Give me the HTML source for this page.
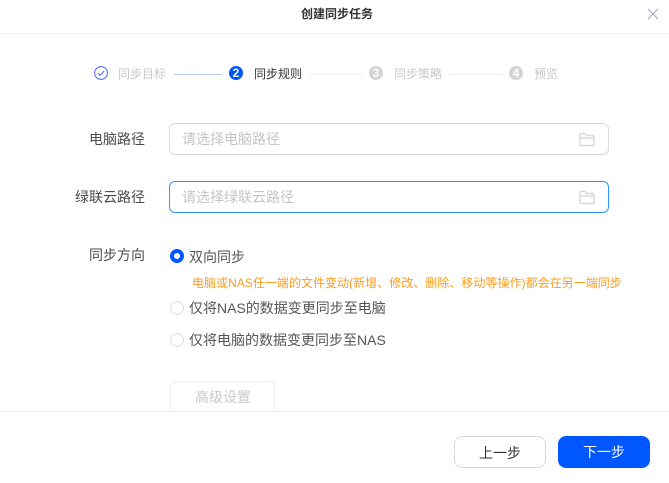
<!DOCTYPE html>
<html lang="zh">
<head>
<meta charset="utf-8">
<style>
html,body{margin:0;padding:0;background:#fff;}
body{width:669px;height:483px;position:relative;overflow:hidden;font-family:"Liberation Sans","Noto Sans CJK SC",sans-serif;}
.a{position:absolute;white-space:nowrap;}
.s{font-size:12px;line-height:16px;top:66px;}
.l{height:1px;top:74px;background:#ececec;}
.n{top:66px;width:14px;height:14px;border-radius:50%;background:#d4d4d4;color:#fff;font-size:12px;font-weight:bold;line-height:14px;text-align:center;}
.lab{font-size:14px;line-height:20px;color:#4a4a4a;right:524px;}
.inp{left:169px;width:438px;height:30px;border:1px solid #d9d9d9;border-radius:6px;}
.ph{font-size:14px;line-height:20px;color:#c4c4c4;left:182px;}
.r{left:170px;width:12px;height:12px;border:1px solid #dcdcdc;border-radius:50%;}
.t{left:189px;font-size:14px;line-height:20px;color:#555;}
.btn{top:436px;width:90px;height:30px;border-radius:8px;font-size:14px;line-height:32px;text-align:center;}
</style>
</head>
<body>
<div class="a" style="left:0;width:674px;top:6px;text-align:center;font-size:12px;font-weight:bold;line-height:16px;color:#333;">创建同步任务</div>
<svg class="a" style="left:646px;top:7px" width="14" height="14" viewBox="0 0 14 14"><path d="M2 2L12 12M12 2L2 12" stroke="#a3a6b4" stroke-width="1" fill="none"/></svg>
<div class="a" style="left:0;top:33px;width:669px;height:1px;background:#ececec;"></div>

<svg class="a" style="left:94px;top:66px" width="14" height="14" viewBox="0 0 14 14"><circle cx="7" cy="7" r="6.4" fill="none" stroke="#4b62f5" stroke-width="1"/><path d="M3.9 7.2L6.2 9.4L10.2 4.9" fill="none" stroke="#4b62f5" stroke-width="1"/></svg>
<div class="a s" style="left:118px;color:#c8c8c8;">同步目标</div>
<div class="a l" style="left:174px;width:48px;background:#b9cff2;"></div>
<div class="a n" style="left:229px;background:#0057ff;">2</div>
<div class="a s" style="left:254px;color:#333;">同步规则</div>
<div class="a l" style="left:310px;width:52px;"></div>
<div class="a n" style="left:369px;">3</div>
<div class="a s" style="left:394px;color:#c8c8c8;">同步策略</div>
<div class="a l" style="left:450px;width:52px;"></div>
<div class="a n" style="left:509px;">4</div>
<div class="a s" style="left:534px;color:#c8c8c8;">预览</div>

<div class="a lab" style="top:129px;">电脑路径</div>
<div class="a inp" style="top:123px;"></div>
<div class="a ph" style="top:129px;">请选择电脑路径</div>
<svg class="a" style="left:579px;top:132px" width="16" height="15" viewBox="0 0 16 15"><path d="M1 2.5a1 1 0 0 1 1-1h4l1.5 2H14a1 1 0 0 1 1 1v8a1 1 0 0 1-1 1H2a1 1 0 0 1-1-1zM1 6H15" fill="none" stroke="#d8d8d8" stroke-width="1.4"/></svg>

<div class="a lab" style="top:187px;">绿联云路径</div>
<div class="a inp" style="top:181px;border-color:#2f95ff;"></div>
<div class="a ph" style="top:187px;">请选择绿联云路径</div>
<svg class="a" style="left:579px;top:190px" width="16" height="15" viewBox="0 0 16 15"><path d="M1 2.5a1 1 0 0 1 1-1h4l1.5 2H14a1 1 0 0 1 1 1v8a1 1 0 0 1-1 1H2a1 1 0 0 1-1-1zM1 6H15" fill="none" stroke="#d8d8d8" stroke-width="1.4"/></svg>

<div class="a lab" style="top:245px;">同步方向</div>
<div class="a" style="left:170px;top:249px;width:6px;height:6px;border:4px solid #0057ff;border-radius:50%;background:#fff;"></div>
<div class="a t" style="top:247px;">双向同步</div>
<div class="a" style="left:192px;top:275px;font-size:12px;line-height:16px;color:#fa9d1e;letter-spacing:.03px;">电脑或NAS任一端的文件变动(新增、修改、删除、移动等操作)都会在另一端同步</div>
<div class="a r" style="top:301px;"></div>
<div class="a t" style="top:298px;">仅将NAS的数据变更同步至电脑</div>
<div class="a r" style="top:333px;"></div>
<div class="a t" style="top:330px;">仅将电脑的数据变更同步至NAS</div>

<div class="a" style="left:170px;top:381px;width:103px;height:40px;border:1px solid #ececec;border-radius:6px;"></div>
<div class="a" style="left:195px;top:387px;font-size:14px;line-height:20px;color:#c8c8c8;">高级设置</div>
<div class="a" style="left:0;top:411px;width:669px;height:72px;background:#fff;border-top:1px solid #ececec;box-sizing:border-box;"></div>

<div class="a btn" style="left:454px;border:1px solid #d9d9d9;color:#333;">上一步</div>
<div class="a btn" style="left:558px;width:92px;height:32px;background:#0057ff;color:#fff;">下一步</div>
</body>
</html>
